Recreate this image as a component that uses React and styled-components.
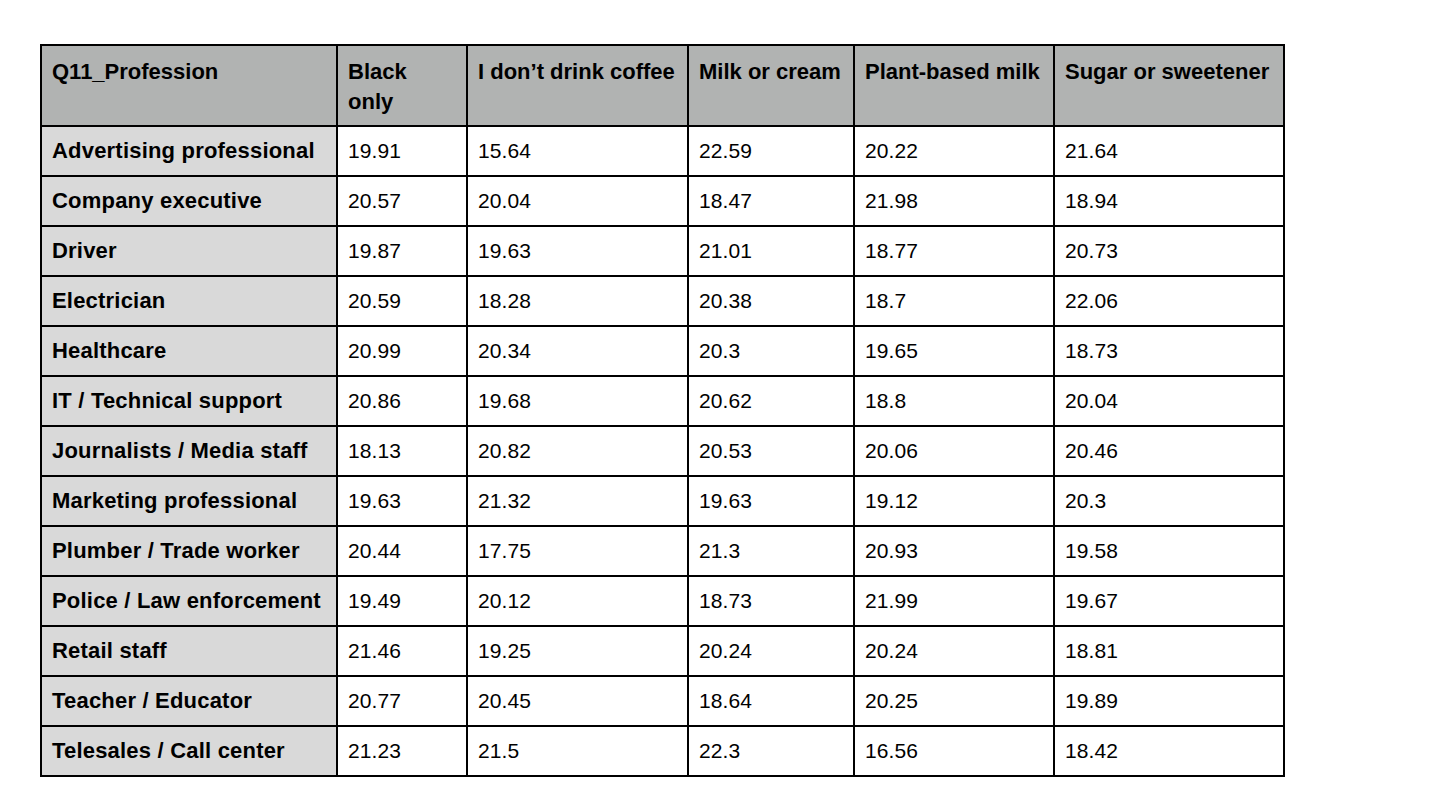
import React from "react";
import styled, { createGlobalStyle } from "styled-components";

const Global = createGlobalStyle`
  html, body { margin: 0; padding: 0; background: #ffffff; }
  body { font-family: "Liberation Sans", Arial, sans-serif; color: #000; }
`;

const Page = styled.div`
  padding: 44px 0 0 40px;
`;

const Table = styled.table`
  border-collapse: collapse;
  table-layout: fixed;
  width: 1243px;
  line-height: 30px;
`;

const Col = styled.col`
  width: ${(p) => p.$w}px;
`;

const Cell = styled.td`
  border: 2px solid #000;
  padding: 9px 4px 9px 10px;
  vertical-align: top;
  text-align: left;
  height: 30px;
  font-size: ${(p) => (p.$bold ? 22 : 21)}px;
  font-weight: ${(p) => (p.$bold ? 700 : 400)};
  letter-spacing: ${(p) => (p.$bold ? "0.2px" : "0.1px")};
  background: ${(p) => p.$bg || "#ffffff"};
`;

const HeadCell = styled.th`
  border: 2px solid #000;
  padding: 11px 9px 8px 10px;
  vertical-align: top;
  text-align: left;
  font-size: 22px;
  font-weight: 700;
  background: #b1b3b2;
  overflow-wrap: normal;
`;

const widths = [296, 130, 221, 166, 200, 230];
const headers = [
  "Q11_Profession",
  "Black only",
  "I don\u2019t drink coffee",
  "Milk or cream",
  "Plant-based milk",
  "Sugar or sweetener",
];

const rows = [
  ["Advertising professional", "19.91", "15.64", "22.59", "20.22", "21.64"],
  ["Company executive", "20.57", "20.04", "18.47", "21.98", "18.94"],
  ["Driver", "19.87", "19.63", "21.01", "18.77", "20.73"],
  ["Electrician", "20.59", "18.28", "20.38", "18.7", "22.06"],
  ["Healthcare", "20.99", "20.34", "20.3", "19.65", "18.73"],
  ["IT / Technical support", "20.86", "19.68", "20.62", "18.8", "20.04"],
  ["Journalists / Media staff", "18.13", "20.82", "20.53", "20.06", "20.46"],
  ["Marketing professional", "19.63", "21.32", "19.63", "19.12", "20.3"],
  ["Plumber / Trade worker", "20.44", "17.75", "21.3", "20.93", "19.58"],
  ["Police / Law enforcement", "19.49", "20.12", "18.73", "21.99", "19.67"],
  ["Retail staff", "21.46", "19.25", "20.24", "20.24", "18.81"],
  ["Teacher / Educator", "20.77", "20.45", "18.64", "20.25", "19.89"],
  ["Telesales / Call center", "21.23", "21.5", "22.3", "16.56", "18.42"],
];

export default function App() {
  return (
    <Page>
      <Global />
      <Table>
        <colgroup>
          {widths.map((w, i) => (
            <Col key={i} $w={w} />
          ))}
        </colgroup>
        <thead>
          <tr>
            {headers.map((h) => (
              <HeadCell key={h}>{h}</HeadCell>
            ))}
          </tr>
        </thead>
        <tbody>
          {rows.map((r) => (
            <tr key={r[0]}>
              {r.map((v, i) =>
                i === 0 ? (
                  <Cell key={i} $bold $bg="#d9d9d9">
                    {v}
                  </Cell>
                ) : (
                  <Cell key={i}>{v}</Cell>
                )
              )}
            </tr>
          ))}
        </tbody>
      </Table>
    </Page>
  );
}
